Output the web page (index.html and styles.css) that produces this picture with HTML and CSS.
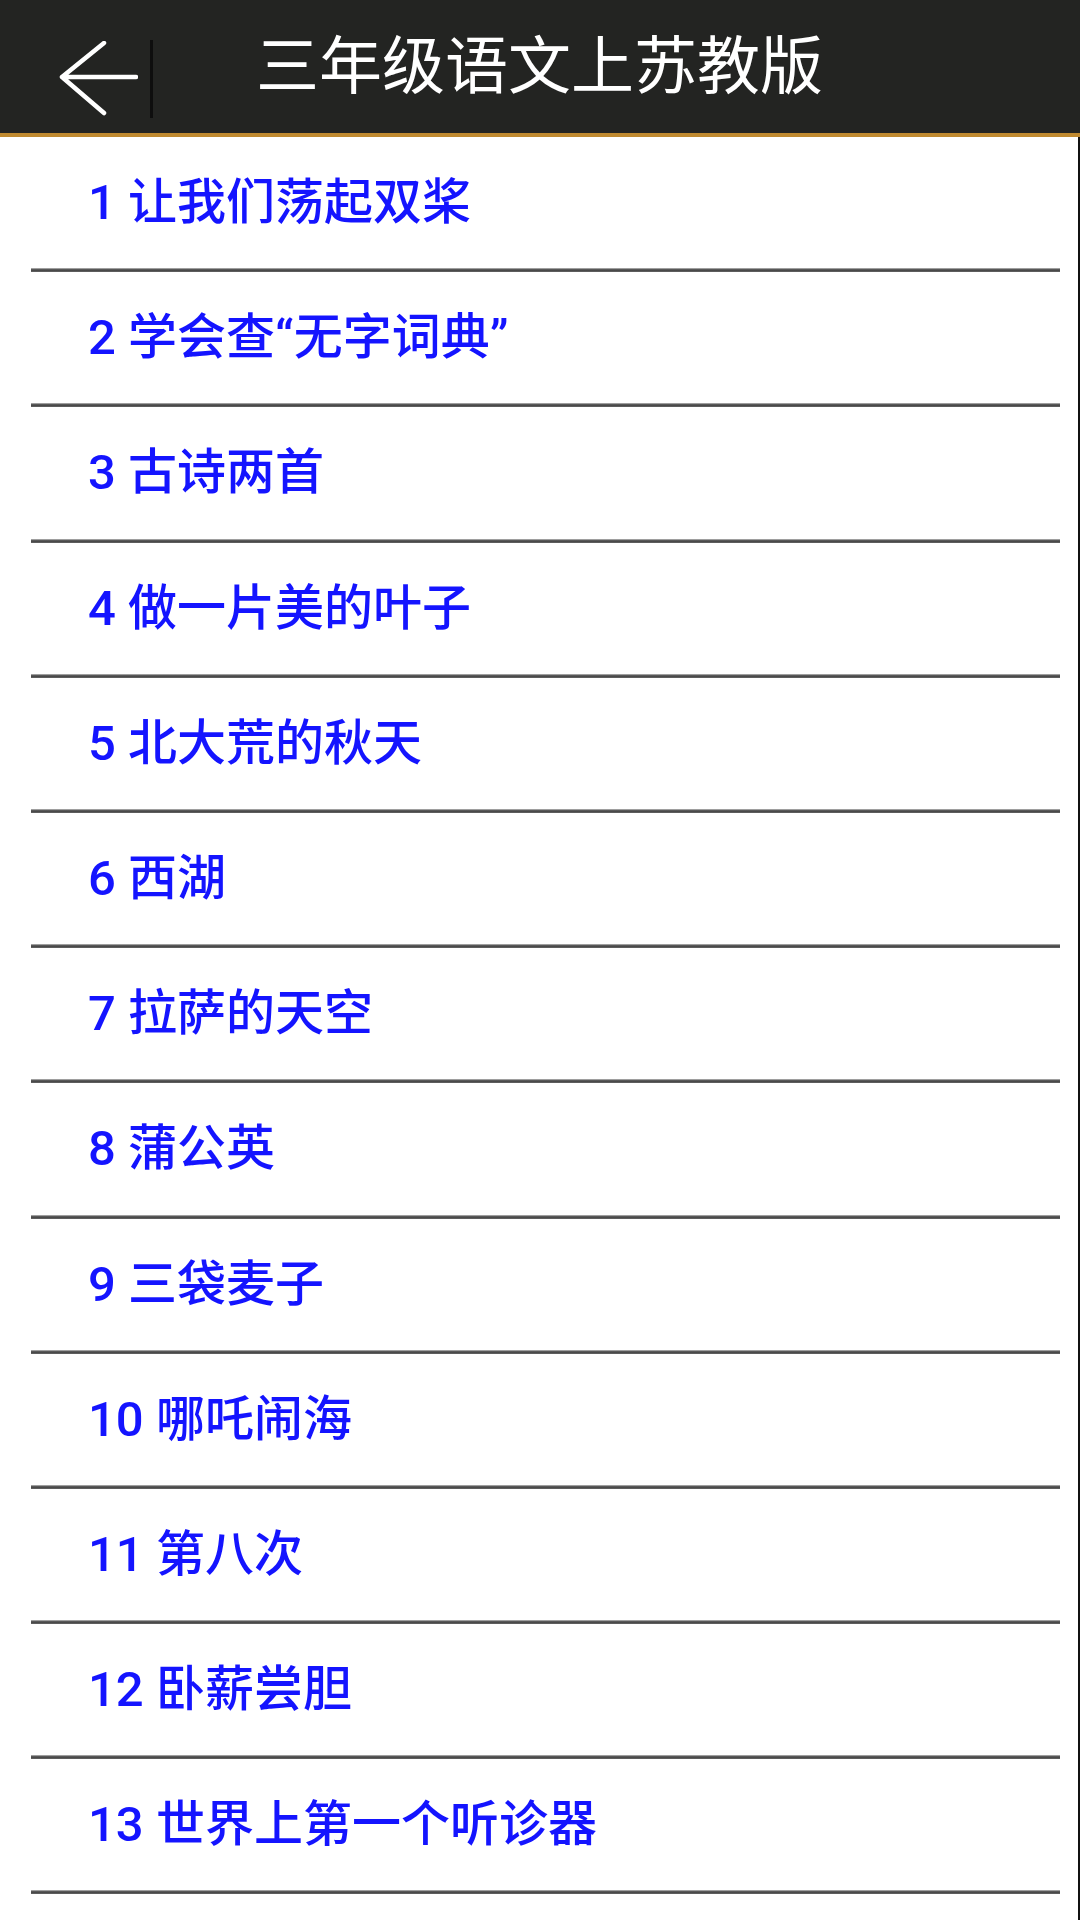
FILE: index.html
```html
<!DOCTYPE html>
<html lang="zh-CN">
<head>
    <meta charset="UTF-8">
    <meta name="viewport" content="width=device-width, initial-scale=1.0">
    <title>三年级语文上苏教版</title>
    <link rel="stylesheet" href="styles.css">
</head>
<body>
    <!-- Top bar -->
    <div class="top-bar">
        <div class="back-btn">
            <svg class="back-icon" viewBox="0 0 80 76" width="80" height="76">
                <path d="M4 36 L78 36 M4 36 L46 2 M4 36 L46 72" fill="none" stroke="#ffffff" stroke-width="4.5" stroke-linecap="round" stroke-linejoin="round"/>
            </svg>
            <span class="back-divider"></span>
        </div>
        <h1 class="title">三年级语文上苏教版</h1>
    </div>

    <!-- Lesson list -->
    <div class="lesson-list">
        <div class="lesson-item"><span class="lesson-name">1 让我们荡起双桨</span></div>
        <div class="lesson-item"><span class="lesson-name">2 学会查“无字词典”</span></div>
        <div class="lesson-item"><span class="lesson-name">3 古诗两首</span></div>
        <div class="lesson-item"><span class="lesson-name">4 做一片美的叶子</span></div>
        <div class="lesson-item"><span class="lesson-name">5 北大荒的秋天</span></div>
        <div class="lesson-item"><span class="lesson-name">6 西湖</span></div>
        <div class="lesson-item"><span class="lesson-name">7 拉萨的天空</span></div>
        <div class="lesson-item"><span class="lesson-name">8 蒲公英</span></div>
        <div class="lesson-item"><span class="lesson-name">9 三袋麦子</span></div>
        <div class="lesson-item"><span class="lesson-name">10 哪吒闹海</span></div>
        <div class="lesson-item"><span class="lesson-name">11 第八次</span></div>
        <div class="lesson-item"><span class="lesson-name">12 卧薪尝胆</span></div>
        <div class="lesson-item"><span class="lesson-name">13 世界上第一个听诊器</span></div>
    </div>
</body>
</html>
```

FILE: styles.css
```css
html, body {
    margin: 0;
    padding: 0;
}

body {
    width: 1080px;
    height: 1920px;
    overflow: hidden;
    background-color: #ffffff;
    font-family: Roboto, "Noto Sans CJK SC", sans-serif;
}

.top-bar {
    display: flex;
    align-items: center;
    height: 133px;
    background-color: #232422; /* Dark header */
    border-bottom: 4px solid #c08a30; /* Orange underline */
}

.back-btn {
    display: flex;
    align-items: center;
    height: 100%;
    padding-left: 58px;
    padding-top: 24px;
    box-sizing: border-box;
}

.back-icon {
    display: block;
}

.back-divider {
    display: block;
    width: 3px;
    height: 78px;
    margin-left: 12px;
    background-color: #0e0e0e;
}

.title {
    margin: 0 0 0 103px;
    font-size: 63px;
    font-weight: normal;
    line-height: 1;
    color: #ffffff;
}

.lesson-list {
    height: 1783px;
    border-right: 2px solid #111111;
}

.lesson-item {
    display: flex;
    align-items: center;
    height: 131.2px;
    padding-left: 88px;
    position: relative;
}

.lesson-item::after {
    content: "";
    position: absolute;
    left: 31px;
    right: 18px;
    bottom: -4px;
    height: 4px;
    background: linear-gradient(#c4c4c4, #5a5a5a 35%, #454545 70%, #6e6e6e);
}

.lesson-item + .lesson-item {
    margin-top: 4px;
}

.lesson-name {
    font-size: 49px;
    font-weight: 500;
    line-height: 1;
    color: #1414ff; /* Blue lesson titles */
}
```
